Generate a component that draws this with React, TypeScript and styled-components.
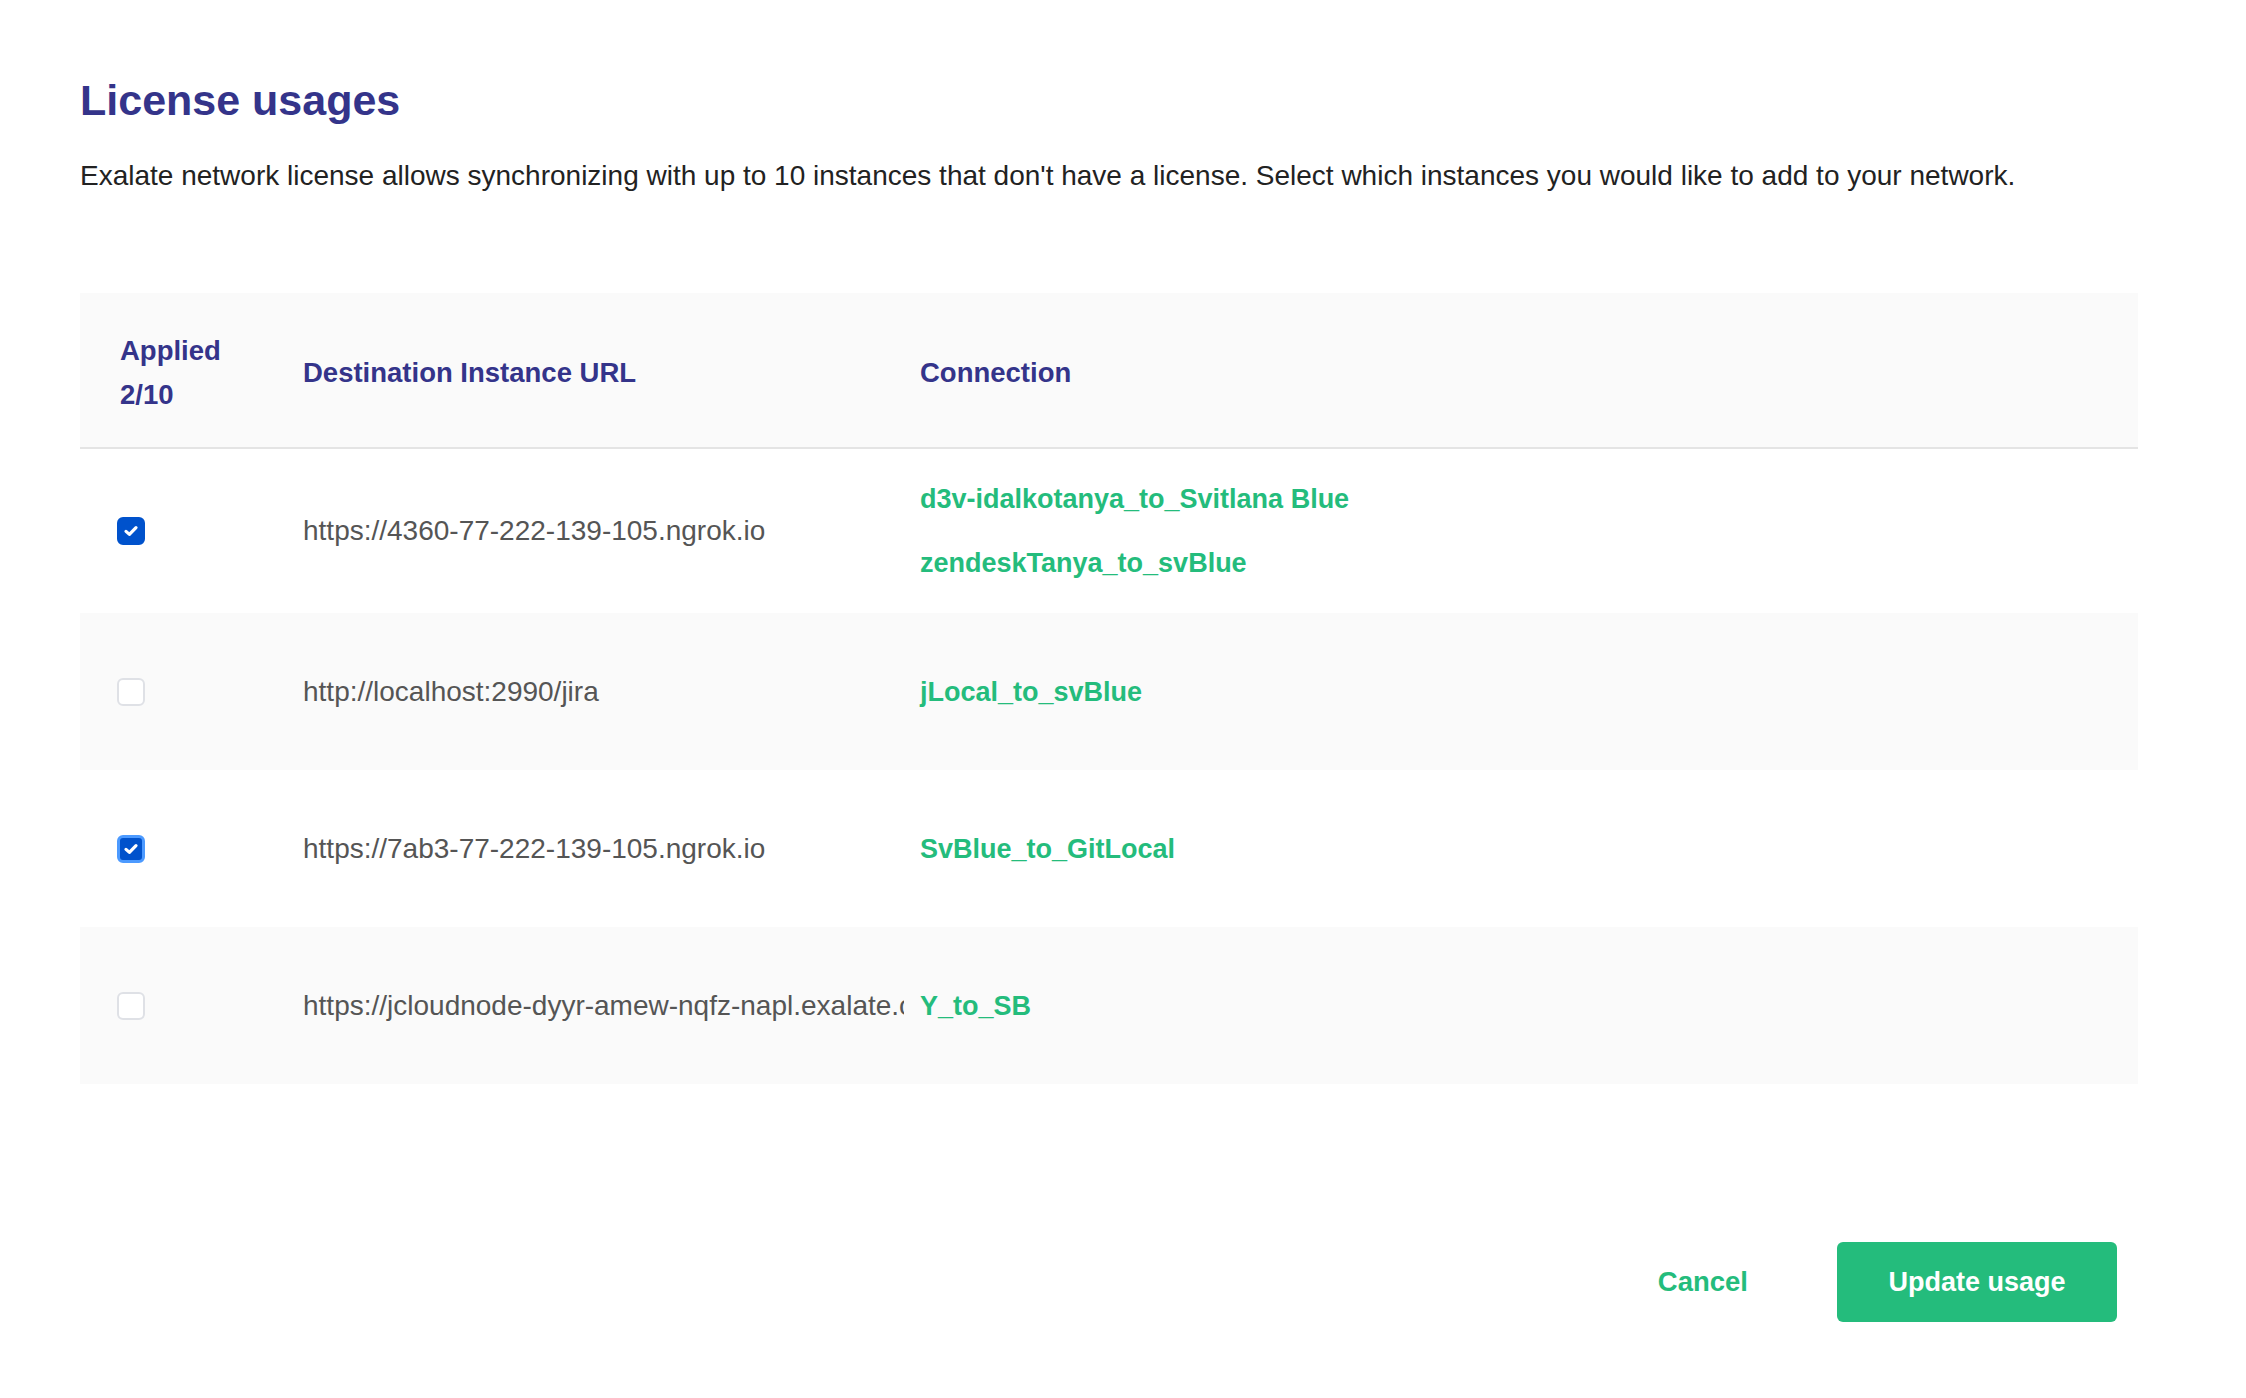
import React, { useState } from 'react';
import styled, { createGlobalStyle } from 'styled-components';

// 라이선스 사용 현황 테이블 데이터
interface UsageRow {
    id: string;
    url: string;
    connections: string[];
    applied: boolean;
    focused?: boolean;
}

const initialRows: UsageRow[] = [
    {
        id: 'r1',
        url: 'https://4360-77-222-139-105.ngrok.io',
        connections: ['d3v-idalkotanya_to_Svitlana Blue', 'zendeskTanya_to_svBlue'],
        applied: true,
    },
    {
        id: 'r2',
        url: 'http://localhost:2990/jira',
        connections: ['jLocal_to_svBlue'],
        applied: false,
    },
    {
        id: 'r3',
        url: 'https://7ab3-77-222-139-105.ngrok.io',
        connections: ['SvBlue_to_GitLocal'],
        applied: true,
        focused: true,
    },
    {
        id: 'r4',
        url: 'https://jcloudnode-dyyr-amew-nqfz-napl.exalate.cloud',
        connections: ['Y_to_SB'],
        applied: false,
    },
];

const LIMIT = 10;

export default function App() {
    const [rows, setRows] = useState<UsageRow[]>(initialRows);

    const appliedCount = rows.filter((r) => r.applied).length;

    const toggle = (id: string) => {
        setRows((prev) => prev.map((r) => (r.id === id ? { ...r, applied: !r.applied } : r)));
    };

    return (
        <>
            <GlobalStyle />
            <Page>
                <Title>License usages</Title>
                <Description>
                    Exalate network license allows synchronizing with up to 10 instances that don't have a
                    license. Select which instances you would like to add to your network.
                </Description>

                <Table>
                    <HeaderRow>
                        <HeaderCell $first>
                            Applied
                            <br />
                            {appliedCount}/{LIMIT}
                        </HeaderCell>
                        <HeaderCell>Destination Instance URL</HeaderCell>
                        <HeaderCell>Connection</HeaderCell>
                    </HeaderRow>

                    {rows.map((row, i) => (
                        <BodyRow key={row.id} $striped={i % 2 === 1}>
                            <CheckCell>
                                <CheckBox
                                    type="button"
                                    role="checkbox"
                                    aria-checked={row.applied}
                                    $checked={row.applied}
                                    $focused={!!row.focused}
                                    onClick={() => toggle(row.id)}
                                >
                                    {row.applied && (
                                        <svg width="18" height="18" viewBox="0 0 18 18" fill="none">
                                            <path
                                                d="M4 9.4 L7.4 12.4 L14 5.6"
                                                stroke="#fff"
                                                strokeWidth="3.2"
                                                strokeLinecap="round"
                                                strokeLinejoin="round"
                                            />
                                        </svg>
                                    )}
                                </CheckBox>
                            </CheckCell>
                            <Cell>
                                <UrlText>{row.url}</UrlText>
                            </Cell>
                            <Cell>
                                <ConnectionList>
                                    {row.connections.map((c) => (
                                        <ConnectionLink key={c} href="#">
                                            {c}
                                        </ConnectionLink>
                                    ))}
                                </ConnectionList>
                            </Cell>
                        </BodyRow>
                    ))}
                </Table>

                <Footer>
                    <CancelButton type="button">Cancel</CancelButton>
                    <PrimaryButton type="button">Update usage</PrimaryButton>
                </Footer>
            </Page>
        </>
    );
}

// ===== 스타일 =====

const GlobalStyle = createGlobalStyle`
    html, body {
        margin: 0;
        padding: 0;
        background: #ffffff;
    }

    body {
        font-family: "Liberation Sans", Arial, sans-serif;
        -webkit-font-smoothing: antialiased;
    }

    * {
        box-sizing: border-box;
    }
`;

const Page = styled.div`
    width: 2246px;
    padding: 74px 0 0 80px;
`;

const Title = styled.h1`
    margin: 0;
    font-size: 43px;
    line-height: 52px;
    font-weight: 700;
    color: #34348a;
`;

const Description = styled.p`
    margin: 31px 0 0;
    font-size: 28px;
    line-height: 38px;
    color: #222222;
`;

const Table = styled.div`
    width: 2058px;
    margin-top: 98px;
`;

const HeaderRow = styled.div`
    display: grid;
    grid-template-columns: 223px 617px 1fr;
    align-items: center;
    padding: 36px 0 30px;
    background: #fafafa;
    border-bottom: 2px solid #e4e4e4;
`;

const HeaderCell = styled.div<{ $first?: boolean }>`
    padding-left: ${(p) => (p.$first ? '40px' : '0')};
    font-size: 27.5px;
    line-height: 44px;
    font-weight: 700;
    color: #34348a;
`;

const BodyRow = styled.div<{ $striped: boolean }>`
    display: grid;
    grid-template-columns: 223px 617px 1fr;
    align-items: center;
    min-height: 157px;
    padding: 30px 0;
    background: ${(p) => (p.$striped ? '#fafafa' : '#ffffff')};
`;

const Cell = styled.div`
    min-width: 0;
`;

const CheckCell = styled.div`
    padding-left: 37px;
    display: flex;
    align-items: center;
`;

const CheckBox = styled.button<{ $checked: boolean; $focused: boolean }>`
    width: 28px;
    height: 28px;
    padding: 0;
    display: flex;
    align-items: center;
    justify-content: center;
    border-radius: 6px;
    cursor: pointer;
    background: ${(p) => (p.$checked ? '#0052cc' : '#ffffff')};
    border: ${(p) =>
        p.$focused ? '3px solid #4c9aff' : p.$checked ? '2px solid #0052cc' : '2.5px solid #dfe1e6'};
`;

const UrlText = styled.div`
    margin-right: 16px;
    overflow: hidden;
    white-space: nowrap;
    font-size: 28px;
    line-height: 40px;
    color: #555555;
`;

const ConnectionList = styled.div`
    display: flex;
    flex-direction: column;
    gap: 24px;
`;

const ConnectionLink = styled.a`
    font-size: 27px;
    line-height: 40px;
    font-weight: 700;
    color: #24bc7c;
    text-decoration: none;
    white-space: nowrap;
`;

const Footer = styled.div`
    width: 2058px;
    display: flex;
    justify-content: flex-end;
    align-items: center;
    margin-top: 158px;
    padding-right: 21px;
`;

const CancelButton = styled.button`
    margin-right: 89px;
    padding: 0;
    background: none;
    border: none;
    font-family: inherit;
    font-size: 27.5px;
    font-weight: 700;
    color: #24bc7c;
    cursor: pointer;
`;

const PrimaryButton = styled.button`
    width: 280px;
    height: 80px;
    border: none;
    border-radius: 6px;
    background: #24bc7c;
    color: #ffffff;
    font-family: inherit;
    font-size: 27px;
    font-weight: 700;
    cursor: pointer;
`;
